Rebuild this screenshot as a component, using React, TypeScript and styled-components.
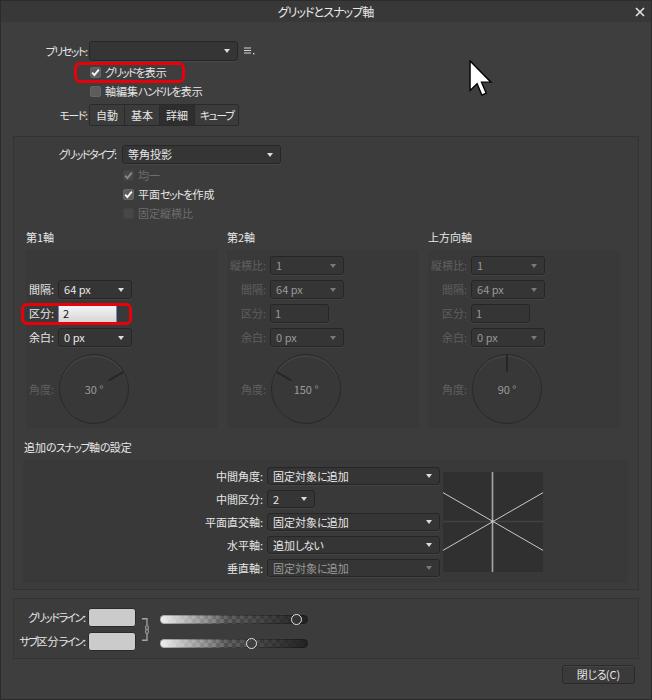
import React from "react";
import styled, { createGlobalStyle } from "styled-components";

const GlobalStyle = createGlobalStyle`
  html, body {
    margin: 0;
    padding: 0;
    background: #3e3e3e;
  }
  body {
    font-family: "Noto Sans CJK JP", "Noto Sans", sans-serif;
    font-size: 11px;
    line-height: 1.3;
    color: #e6e6e6;
    font-feature-settings: "palt";
  }
  * {
    box-sizing: border-box;
  }
`;

// the UI font of the original sets kana narrower than kanji
const Katakana = styled.span`
  letter-spacing: var(--kata, -1.5px);
`;

const Hiragana = styled.span`
  letter-spacing: var(--hira, -0.8px);
`;

function Jp({ text }: { text: string }) {
  const parts = text.split(/([\u3040-\u309f]+|[\u30a0-\u30ff]+)/);
  return (
    <>
      {parts.map((s, i) => {
        if (i % 2 === 0) return s;
        return /[\u3040-\u309f]/.test(s) ? (
          <Hiragana key={i}>{s}</Hiragana>
        ) : (
          <Katakana key={i}>{s}</Katakana>
        );
      })}
    </>
  );
}

const Window = styled.div`
  position: relative;
  width: 652px;
  height: 700px;
  background: #3e3e3e;
  border: 1px solid #2b2b2b;
  display: flex;
  flex-direction: column;
  overflow: hidden;
`;

const TitleBar = styled.div`
  height: 21px;
  background: #383838;
  display: grid;
  grid-template-columns: 1fr auto 1fr;
  align-items: center;
`;

const Title = styled.div`
  --kata: -1px;
  --hira: -0.6px;
  font-size: 12px;
  color: #e8e8e8;
`;

const CloseX = styled.svg`
  justify-self: end;
  margin-right: 6px;
`;

const Top = styled.div`
  padding-top: 19px;
  display: flex;
  flex-direction: column;
`;

const FieldRow = styled.div<{ $h: number; $mt?: number; $gap?: number }>`
  display: flex;
  align-items: center;
  height: ${(p) => p.$h}px;
  margin-top: ${(p) => p.$mt ?? 0}px;
  gap: ${(p) => p.$gap ?? 0}px;
`;

const FieldLabel = styled.div<{ $w: number }>`
  width: ${(p) => p.$w}px;
  flex-shrink: 0;
  text-align: right;
  padding-right: 1px;
  white-space: nowrap;
`;

const SelectBox = styled.div<{ $w: number; $h: number; $dim?: boolean }>`
  width: ${(p) => p.$w}px;
  height: ${(p) => p.$h}px;
  flex-shrink: 0;
  display: flex;
  align-items: center;
  justify-content: space-between;
  padding: 0 7px 0 5px;
  background: #353535;
  border: 1px solid #262626;
  border-radius: 3px;
  box-shadow: 0 1px 0 rgba(255, 255, 255, 0.05);
  color: ${(p) => (p.$dim ? "#999999" : "#e8e8e8")};
  line-height: 1;
  white-space: nowrap;
`;

const Caret = styled.span<{ $dim?: boolean }>`
  width: 0;
  height: 0;
  border-left: 3px solid transparent;
  border-right: 3px solid transparent;
  border-top: 4px solid ${(p) => (p.$dim ? "#7a7a7a" : "#dcdcdc")};
`;

const TextField = styled.div<{ $w: number; $dim?: boolean; $active?: boolean }>`
  width: ${(p) => p.$w}px;
  height: 19px;
  display: flex;
  align-items: center;
  padding-left: 4px;
  border-radius: ${(p) => (p.$active ? "1px" : "3px")};
  border: 1px solid ${(p) => (p.$active ? "#6a8cc0" : "#262626")};
  background: ${(p) =>
    p.$active ? "linear-gradient(#f6f6f6, #d6d6d6)" : "#353535"};
  color: ${(p) => (p.$active ? "#151515" : p.$dim ? "#999999" : "#e8e8e8")};
  box-shadow: 0 1px 0 rgba(255, 255, 255, 0.05);
  line-height: 1;
`;

const PresetMenu = styled.svg`
  margin-left: 6px;
`;

const CheckList = styled.div<{ $indent: number; $mt: number }>`
  display: flex;
  flex-direction: column;
  padding-left: ${(p) => p.$indent}px;
  margin-top: ${(p) => p.$mt}px;
`;

const CheckRow = styled.div<{ $disabled?: boolean }>`
  height: 19px;
  display: flex;
  align-items: center;
  gap: 4px;
  color: ${(p) => (p.$disabled ? "#6c6c6c" : "#e6e6e6")};
`;

const Box = styled.span<{ $disabled?: boolean }>`
  width: 11px;
  height: 11px;
  border-radius: 2px;
  background: ${(p) => (p.$disabled ? "#474747" : "#5c5c5c")};
  border: 1px solid ${(p) => (p.$disabled ? "#424242" : "#666666")};
  display: inline-flex;
  align-items: center;
  justify-content: center;
`;

const Segmented = styled.div`
  display: flex;
  height: 22px;
  border: 1px solid #2a2a2a;
  border-radius: 2px;
  overflow: hidden;
`;

const SegButton = styled.div<{ $w: number; $active?: boolean }>`
  width: ${(p) => p.$w}px;
  display: flex;
  align-items: center;
  justify-content: center;
  background: ${(p) => (p.$active ? "#2e2e2e" : "#3b3b3b")};
  & + & {
    border-left: 1px solid #2a2a2a;
  }
`;

const MainPanel = styled.div`
  margin: 10px 12px 0;
  height: 454px;
  border: 1px solid #333333;
  background: #3c3c3c;
  padding-top: 8px;
  display: flex;
  flex-direction: column;
`;

const AxisColumns = styled.div`
  display: flex;
  gap: 9px;
  padding-left: 12px;
  margin-top: 6px;
`;

const AxisColumn = styled.div`
  width: 192px;
  display: flex;
  flex-direction: column;
`;

const SectionTitle = styled.div<{ $ml?: number }>`
  height: 16px;
  line-height: 16px;
  margin-bottom: 5px;
  margin-left: ${(p) => p.$ml ?? 0}px;
  color: #e8e8e8;
`;

const SnapSection = styled.div`
  margin-top: 11px;
`;

const AxisPanel = styled.div`
  height: 178px;
  background: #393939;
  padding: 6px 4px 4px 3px;
  display: grid;
  grid-template-columns: auto auto;
  grid-template-rows: repeat(4, 19px) 72px;
  justify-content: start;
  align-items: center;
  column-gap: 4px;
  row-gap: 5px;
`;

const AxisLabel = styled.div<{ $dim?: boolean; $dial?: boolean }>`
  justify-self: end;
  white-space: nowrap;
  color: ${(p) => (p.$dim ? "#5f5f5f" : "#e6e6e6")};
  margin-top: ${(p) => (p.$dial ? 2 : 0)}px;
`;

const Spacer = styled.div`
  grid-column: 1 / -1;
`;

const DialFace = styled.div`
  position: relative;
  align-self: end;
  justify-self: start;
  margin-left: 1px;
  width: 70px;
  height: 70px;
  border-radius: 50%;
  border: 1px solid #292929;
  background: #383838;
  box-shadow: inset 0 2px 0 rgba(255, 255, 255, 0.05);
  display: flex;
  align-items: center;
  justify-content: center;
  color: #9a9a9a;
`;

const Needle = styled.svg`
  position: absolute;
  left: 0;
  top: 0;
`;

const SnapPanel = styled.div`
  margin-left: 9px;
  width: 605px;
  height: 123px;
  background: #393939;
  padding: 7px 0 6px;
  display: flex;
  align-items: flex-start;
`;

const SnapForm = styled.div`
  display: grid;
  grid-template-columns: 240px 173px;
  grid-auto-rows: 18px;
  column-gap: 4px;
  row-gap: 5px;
  align-items: center;
`;

const SnapLabel = styled.div`
  justify-self: end;
  white-space: nowrap;
`;

const Preview = styled.svg`
  margin: 5px 0 0 3px;
  background: #303030;
  flex-shrink: 0;
`;

const LinePanel = styled.div`
  margin: 8px 12px 0;
  height: 61px;
  border: 1px solid #333333;
  background: #3c3c3c;
  padding-top: 9px;
  display: grid;
  grid-template-columns: 74px 48px 24px 148px;
  grid-template-rows: 19px 19px;
  row-gap: 5px;
  align-items: center;
`;

const LineLabel = styled.div<{ $row: number }>`
  grid-row: ${(p) => p.$row};
  grid-column: 1;
  justify-self: end;
  padding-right: 2px;
  white-space: nowrap;
`;

const Swatch = styled.div<{ $row: number }>`
  grid-row: ${(p) => p.$row};
  grid-column: 2;
  height: 19px;
  border-radius: 3px;
  background: #cbcbcb;
  border: 1px solid #2a2a2a;
`;

const LinkBracket = styled.svg`
  grid-column: 3;
  grid-row: 1 / span 2;
  margin-left: 6px;
`;

const Track = styled.div<{ $row: number }>`
  position: relative;
  grid-row: ${(p) => p.$row};
  grid-column: 4;
  align-self: start;
  margin-top: 7px;
  height: 9px;
  border-radius: 5px;
  background-color: #6e6e6e;
  background-image: linear-gradient(
      to right,
      rgba(240, 240, 240, 1) 0%,
      rgba(240, 240, 240, 0) 45%
    ),
    linear-gradient(to right, rgba(34, 34, 34, 0) 35%, rgba(34, 34, 34, 1) 100%),
    linear-gradient(45deg, #555 25%, transparent 25%, transparent 75%, #555 75%),
    linear-gradient(45deg, #555 25%, transparent 25%, transparent 75%, #555 75%);
  background-size: 100% 100%, 100% 100%, 8px 8px, 8px 8px;
  background-position: 0 0, 0 0, 0 0, 4px 4px;
  box-shadow: inset 0 0 0 1px rgba(0, 0, 0, 0.25);
`;

const Knob = styled.span`
  position: absolute;
  top: -1px;
  width: 11px;
  height: 11px;
  margin-left: -5.5px;
  border-radius: 50%;
  border: 1.5px solid #e2e2e2;
  background: rgba(60, 60, 60, 0.6);
`;

const Footer = styled.div`
  display: flex;
  justify-content: flex-end;
  padding: 6px 16px 0 0;
`;

const CloseButton = styled.div`
  width: 73px;
  height: 19px;
  display: flex;
  align-items: center;
  justify-content: center;
  border: 1px solid #2a2a2a;
  border-radius: 3px;
  background: #3a3a3a;
  box-shadow: inset 0 1px 0 rgba(255, 255, 255, 0.05);
  color: #e6e6e6;
`;

const Highlight = styled.div<{ $x: number; $y: number; $w: number; $h: number }>`
  position: absolute;
  left: ${(p) => p.$x}px;
  top: ${(p) => p.$y}px;
  width: ${(p) => p.$w}px;
  height: ${(p) => p.$h}px;
  border: 3px solid #e8000a;
  border-radius: 6px;
  pointer-events: none;
`;

const Cursor = styled.svg`
  position: absolute;
  left: 468px;
  top: 59px;
`;

function Dropdown({
  value,
  w,
  h = 19,
  dim,
}: {
  value: string;
  w: number;
  h?: number;
  dim?: boolean;
}) {
  return (
    <SelectBox $w={w} $h={h} $dim={dim}>
      <span>
        <Jp text={value} />
      </span>
      <Caret $dim={dim} />
    </SelectBox>
  );
}

function Check({
  label,
  checked,
  disabled,
}: {
  label: string;
  checked?: boolean;
  disabled?: boolean;
}) {
  return (
    <CheckRow $disabled={disabled}>
      <Box $disabled={disabled}>
        {checked && (
          <svg width="9" height="9" viewBox="0 0 9 9">
            <polyline
              points="1.2,4.6 3.4,7 7.8,1.6"
              fill="none"
              stroke={disabled ? "#8a8a8a" : "#ffffff"}
              strokeWidth="1.8"
            />
          </svg>
        )}
      </Box>
      <span>
        <Jp text={label} />
      </span>
    </CheckRow>
  );
}

function Dial({ angle }: { angle: number }) {
  const a = (angle * Math.PI) / 180;
  const c = 34;
  const p = (r: number) => [c + r * Math.cos(a), c - r * Math.sin(a)];
  const [x1, y1] = p(17);
  const [x2, y2] = p(34);
  return (
    <DialFace>
      <Needle width="68" height="68" viewBox="0 0 68 68">
        <line x1={x1} y1={y1} x2={x2} y2={y2} stroke="#262626" strokeWidth="2" />
      </Needle>
      <span>{angle} °</span>
    </DialFace>
  );
}

type AxisRow = { label: string; value: string; kind: "select" | "input" | "active" };

const secondaryRows: AxisRow[] = [
  { label: "縦横比:", value: "1", kind: "select" },
  { label: "間隔:", value: "64 px", kind: "select" },
  { label: "区分:", value: "1", kind: "input" },
  { label: "余白:", value: "0 px", kind: "select" },
];

const primaryRows: AxisRow[] = [
  { label: "間隔:", value: "64 px", kind: "select" },
  { label: "区分:", value: "2", kind: "active" },
  { label: "余白:", value: "0 px", kind: "select" },
];

function Axis({
  title,
  rows,
  angle,
  dim,
}: {
  title: string;
  rows: AxisRow[];
  angle: number;
  dim?: boolean;
}) {
  return (
    <AxisColumn>
      <SectionTitle>{title}</SectionTitle>
      <AxisPanel>
        {rows.length < 4 && <Spacer />}
        {rows.map((r) => (
          <React.Fragment key={r.label}>
            <AxisLabel $dim={dim}>{r.label}</AxisLabel>
            {r.kind === "select" ? (
              <Dropdown value={r.value} w={74} dim={dim} />
            ) : (
              <TextField $w={59} $dim={dim} $active={r.kind === "active"}>
                {r.value}
              </TextField>
            )}
          </React.Fragment>
        ))}
        <AxisLabel $dim $dial>
          角度:
        </AxisLabel>
        <Dial angle={angle} />
      </AxisPanel>
    </AxisColumn>
  );
}

const snapRows = [
  { label: "中間角度:", value: "固定対象に追加", w: 173 },
  { label: "中間区分:", value: "2", w: 48 },
  { label: "平面直交軸:", value: "固定対象に追加", w: 173 },
  { label: "水平軸:", value: "追加しない", w: 173 },
  { label: "垂直軸:", value: "固定対象に追加", w: 173, dim: true },
];

const lineRows = [
  { label: "グリッドライン:", opacity: 0.925 },
  { label: "サブ区分ライン:", opacity: 0.615 },
];

export default function App() {
  const t = Math.tan(Math.PI / 6) * 50;
  return (
    <>
      <GlobalStyle />
      <Window>
        <TitleBar>
          <span />
          <Title>
            <Jp text="グリッドとスナップ軸" />
          </Title>
          <CloseX width="10" height="10" viewBox="0 0 10 10">
            <path d="M1 1 L9 9 M9 1 L1 9" stroke="#e4e4e4" strokeWidth="1.6" />
          </CloseX>
        </TitleBar>

        <Top>
          <FieldRow $h={20}>
            <FieldLabel $w={88}>
              <Jp text="プリセット:" />
            </FieldLabel>
            <Dropdown value="" w={149} h={20} />
            <PresetMenu width="11" height="8" viewBox="0 0 11 8">
              <path d="M0 1 H7 M0 3.5 H7 M0 6 H7" stroke="#d6d6d6" strokeWidth="1.2" />
              <rect x="9" y="6" width="1.4" height="1.4" fill="#d6d6d6" />
            </PresetMenu>
          </FieldRow>
          <CheckList $indent={89} $mt={2}>
            <Check checked label="グリッドを表示" />
            <Check label="軸編集ハンドルを表示" />
          </CheckList>
          <FieldRow $h={22} $mt={3}>
            <FieldLabel $w={88}>
              <Jp text="モード:" />
            </FieldLabel>
            <Segmented>
              <SegButton $w={34}>自動</SegButton>
              <SegButton $w={35}>基本</SegButton>
              <SegButton $w={35} $active>
                詳細
              </SegButton>
              <SegButton $w={44}>
                <Jp text="キューブ" />
              </SegButton>
            </Segmented>
          </FieldRow>
        </Top>

        <MainPanel>
          <FieldRow $h={19} $gap={4}>
            <FieldLabel $w={104}>
              <Jp text="グリッドタイプ:" />
            </FieldLabel>
            <Dropdown value="等角投影" w={159} />
          </FieldRow>
          <CheckList $indent={109} $mt={2}>
            <Check checked disabled label="均一" />
            <Check checked label="平面セットを作成" />
            <Check disabled label="固定縦横比" />
          </CheckList>

          <AxisColumns>
            <Axis title="第1軸" rows={primaryRows} angle={30} />
            <Axis title="第2軸" rows={secondaryRows} angle={150} dim />
            <Axis title="上方向軸" rows={secondaryRows} angle={90} dim />
          </AxisColumns>

          <SnapSection>
            <SectionTitle $ml={10}>
              <Jp text="追加のスナップ軸の設定" />
            </SectionTitle>
            <SnapPanel>
              <SnapForm>
                {snapRows.map((r) => (
                  <React.Fragment key={r.label}>
                    <SnapLabel>{r.label}</SnapLabel>
                    <Dropdown value={r.value} w={r.w} h={18} dim={r.dim} />
                  </React.Fragment>
                ))}
              </SnapForm>
              <Preview width="100" height="100" viewBox="0 0 100 100">
                <line x1="0" y1="49.5" x2="100" y2="49.5" stroke="#414141" strokeWidth="1.5" />
                <line x1="0" y1={49.5 - t} x2="100" y2={49.5 + t} stroke="#c9c9c9" strokeWidth="1" />
                <line x1="0" y1={49.5 + t} x2="100" y2={49.5 - t} stroke="#c9c9c9" strokeWidth="1" />
                <line x1="49.5" y1="0" x2="49.5" y2="100" stroke="#a8a8a8" strokeWidth="1.6" />
                <circle cx="49.5" cy="49.5" r="1.6" fill="#bdbdbd" />
              </Preview>
            </SnapPanel>
          </SnapSection>
        </MainPanel>

        <LinePanel>
          {lineRows.map((r, i) => (
            <React.Fragment key={r.label}>
              <LineLabel $row={i + 1}>
                <Jp text={r.label} />
              </LineLabel>
              <Swatch $row={i + 1} />
              <Track $row={i + 1}>
                <Knob style={{ left: `${r.opacity * 100}%` }} />
              </Track>
            </React.Fragment>
          ))}
          <LinkBracket width="8" height="23" viewBox="0 0 8 23">
            <path
              d="M0 0.75 H5 V7 M5 16 V22.25 H0"
              fill="none"
              stroke="#a4a4a4"
              strokeWidth="1.3"
            />
            <ellipse cx="5" cy="9.6" rx="1.4" ry="2.1" fill="none" stroke="#a4a4a4" strokeWidth="1.1" />
            <ellipse cx="5" cy="13.4" rx="1.4" ry="2.1" fill="none" stroke="#a4a4a4" strokeWidth="1.1" />
          </LinkBracket>
        </LinePanel>

        <Footer>
          <CloseButton>
            <Jp text="閉じる(C)" />
          </CloseButton>
        </Footer>

        <Highlight $x={73} $y={61} $w={111} $h={21} />
        <Highlight $x={20} $y={302} $w={111} $h={22} />

        <Cursor width="24" height="37" viewBox="0 0 12.5 19.5">
          <path
            d="M0.5 0.5 L0.5 16 L4.2 12.5 L6.7 18.5 L9 17.5 L6.5 11.7 L11.5 11.7 Z"
            fill="#ffffff"
            stroke="#000000"
            strokeWidth="0.7"
            strokeLinejoin="miter"
          />
        </Cursor>
      </Window>
    </>
  );
}
